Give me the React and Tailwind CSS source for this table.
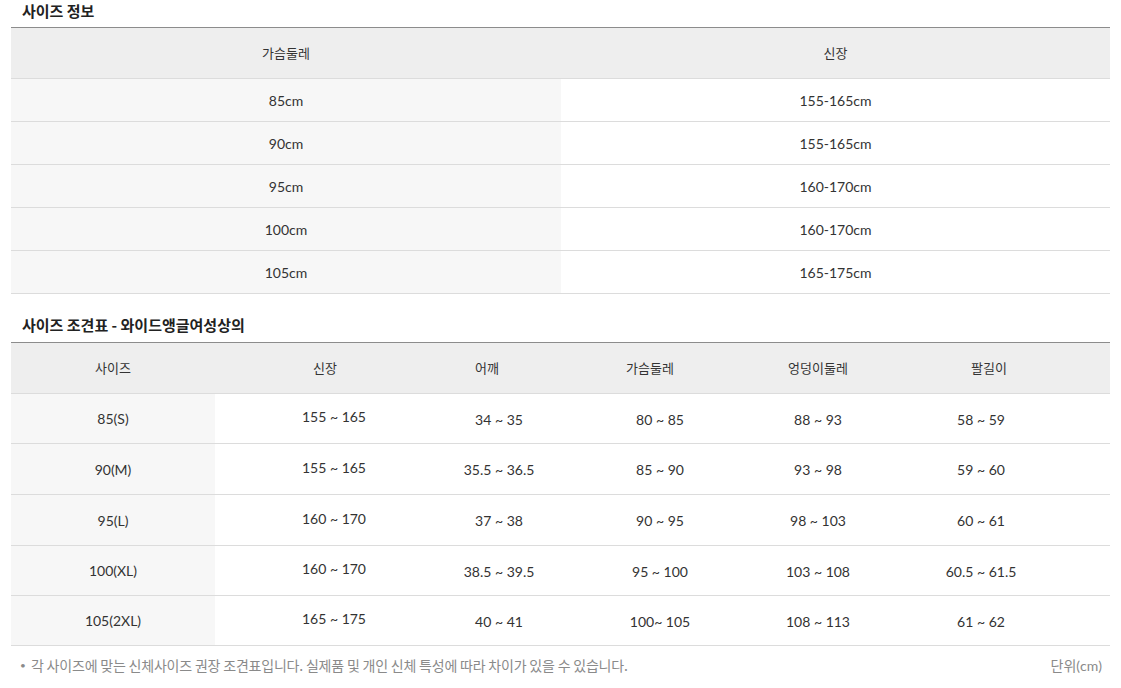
import React from "react";

const K = ({ children, className = "" }) => (
  <span className={"font-['Noto_Sans_CJK_KR',sans-serif] " + (className || "text-[13px]")}>{children}</span>
);

const info = [
  ["85cm", "155-165cm"],
  ["90cm", "155-165cm"],
  ["95cm", "160-170cm"],
  ["100cm", "160-170cm"],
  ["105cm", "165-175cm"],
];

const chart = [
  ["85(S)", "155 ~ 165", "34 ~ 35", "80 ~ 85", "88 ~ 93", "58 ~ 59", "h-[50px]"],
  ["90(M)", "155 ~ 165", "35.5 ~ 36.5", "85 ~ 90", "93 ~ 98", "59 ~ 60", "h-[51px]"],
  ["95(L)", "160 ~ 170", "37 ~ 38", "90 ~ 95", "98 ~ 103", "60 ~ 61", "h-[51px]"],
  ["100(XL)", "160 ~ 170", "38.5 ~ 39.5", "95 ~ 100", "103 ~ 108", "60.5 ~ 61.5", "h-[50px]"],
  ["105(2XL)", "165 ~ 175", "40 ~ 41", "100~ 105", "108 ~ 113", "61 ~ 62", "h-[50px]"],
];

export default function App() {
  return (
    <div className="w-[1121px] h-[688px] bg-white px-[11px] font-['Lato','Noto_Sans_CJK_KR',sans-serif] text-[14px] text-[#333]">
      {/* Title 1 */}
      <div className="h-[27px] flex items-start pl-[11px] pt-[1px]">
        <h2 className="font-['Noto_Sans_CJK_KR',sans-serif] font-bold text-[15px] leading-[20px] text-[#222]">사이즈 정보</h2>
      </div>

      {/* Table 1 */}
      <div className="w-[1099px]">
        <div className="grid grid-cols-[550px_1fr] h-[52px] border-t border-b border-t-[#8c8c8c] border-b-[#dcdcdc] bg-[#eeeeee]">
          <div className="flex items-center justify-center"><K>가슴둘레</K></div>
          <div className="flex items-center justify-center"><K>신장</K></div>
        </div>
        {info.map((r, i) => (
          <div key={i} className="grid grid-cols-[550px_1fr] h-[43px] border-b border-[#dcdcdc]">
            <div className="flex items-center justify-center bg-[#f7f7f7]">{r[0]}</div>
            <div className="flex items-center justify-center">{r[1]}</div>
          </div>
        ))}
      </div>

      {/* Title 2 */}
      <div className="h-[48px] flex items-end pl-[11px] pb-[7px]">
        <h2 className="font-['Noto_Sans_CJK_KR',sans-serif] font-bold text-[15px] leading-[20px] text-[#222]">사이즈 조견표 - 와이드앵글여성상의</h2>
      </div>

      {/* Table 2 */}
      <div className="w-[1099px]">
        <div className="grid grid-cols-[204px_238px_92px_230px_86px_240px_1fr] h-[52px] border-t border-b border-t-[#8c8c8c] border-b-[#dcdcdc] bg-[#eeeeee]">
          <div className="flex items-center justify-center"><K>사이즈</K></div>
          <div className="flex items-center justify-center pr-[18px]"><K>신장</K></div>
          <div className="flex items-center justify-center pr-[24px] whitespace-nowrap"><K>어깨</K></div>
          <div className="flex items-center justify-center pr-[20px]"><K>가슴둘레</K></div>
          <div className="flex items-center justify-center whitespace-nowrap"><K>엉덩이둘레</K></div>
          <div className="flex items-center justify-center pl-[16px]"><K>팔길이</K></div>
          <div />
        </div>
        {chart.map((r, i) => (
          <div key={i} className={"grid grid-cols-[204px_238px_92px_230px_86px_240px_1fr] border-b border-[#dcdcdc] " + r[6]}>
            <div className="flex items-center justify-center bg-[#f7f7f7]">{r[0]}</div>
            <div className="flex items-center justify-center pb-[4px] whitespace-nowrap">{r[1]}</div>
            <div className="flex items-center justify-center pt-[1px] whitespace-nowrap">{r[2]}</div>
            <div className="flex items-center justify-center pt-[1px] whitespace-nowrap">{r[3]}</div>
            <div className="flex items-center justify-center pt-[1px] whitespace-nowrap">{r[4]}</div>
            <div className="flex items-center justify-center pt-[1px] whitespace-nowrap">{r[5]}</div>
            <div />
          </div>
        ))}
      </div>

      {/* Footnote */}
      <div className="w-[1099px] flex items-start justify-between pt-[9px] pl-[9px] pr-[8px] text-[#8a8a8a]">
        <div className="flex items-center leading-[20px]">
          <span className="w-[11px] text-[10px] leading-[20px]">•</span>
          <K className="text-[14px] tracking-[-0.2px]">각 사이즈에 맞는 신체사이즈 권장 조견표입니다. 실제품 및 개인 신체 특성에 따라 차이가 있을 수 있습니다.</K>
        </div>
        <div className="leading-[20px]"><K className="text-[14px]">단위</K><span className="text-[14px]">(cm)</span></div>
      </div>
    </div>
  );
}
